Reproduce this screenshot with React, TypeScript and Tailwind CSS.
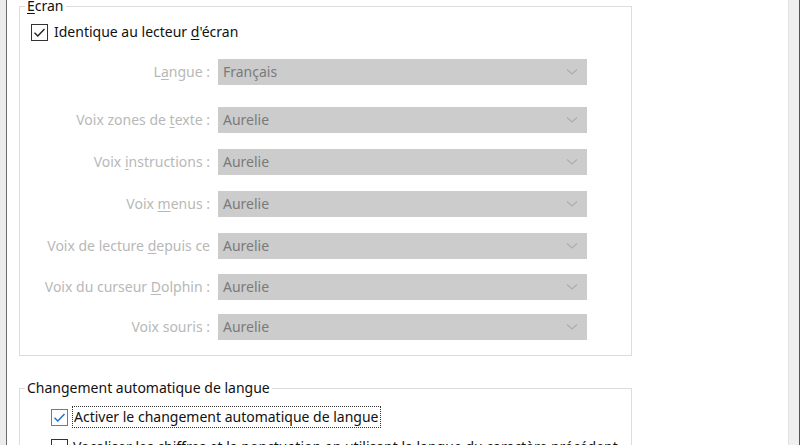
import React from "react";

const font = { fontFamily: '"Noto Sans", "Segoe UI", Arial, sans-serif' };

function Check({ blue }: { blue?: boolean }) {
  return (
    <div
      className={`w-[17px] h-[17px] shrink-0 border bg-white flex items-center justify-center ${
        blue ? "border-[#3c86d4]" : "border-[#333333]"
      }`}
    >
      <svg width="13" height="13" viewBox="0 0 13 13">
        <path d="M1.5 6.8 L4.8 10 L11.5 3" fill="none" stroke={blue ? "#1f6fc7" : "#222"} strokeWidth="1.4" />
      </svg>
    </div>
  );
}

function EmptyCheck() {
  return <div className="w-[17px] h-[17px] shrink-0 border border-[#333333] bg-white" />;
}

function Combo({ value }: { value: string }) {
  return (
    <div className="w-[369px] h-[26px] bg-[#cccccc] flex items-center justify-between pl-[5px] pr-[9px] text-[#7a7a7a]">
      <span>{value}</span>
      <svg width="12" height="8" viewBox="0 0 12 8">
        <path d="M1 1.5 L6 6 L11 1.5" fill="none" stroke="#adadad" strokeWidth="1.1" />
      </svg>
    </div>
  );
}

function Row({ label, value, mt }: { label: React.ReactNode; value: string; mt: string }) {
  return (
    <div className={`flex items-center ${mt}`}>
      <div className="w-[192px] text-right text-[#b8b8b8] whitespace-nowrap pr-[2px] overflow-hidden">{label}</div>
      <div className="ml-[6px]">
        <Combo value={value} />
      </div>
    </div>
  );
}

export default function App() {
  return (
    <div className="w-[800px] h-[445px] overflow-hidden bg-white flex text-[14px] leading-[20px] text-[#111]" style={font}>
      <div className="w-[7px] h-full bg-[#ececec] border-r border-[#6d6d6d] shrink-0" />
      <div className="flex-1 min-w-0">
        <fieldset className="ml-[12px] w-[613px] min-w-0 mt-[-4px] border border-[#dcdcdc] pb-[15px]">
          <legend className="ml-[5px] px-[2px]">
            <span className="underline underline-offset-2">E</span>cran
          </legend>
          <div className="flex items-center mt-[6px] ml-[11px]">
            <Check />
            <span className="ml-[6px]">
              Identique au lecteur <span className="underline underline-offset-2">d</span>'écran
            </span>
          </div>
          <Row
            mt="mt-[17px]"
            label={
              <>
                L<span className="underline underline-offset-2">a</span>ngue :
              </>
            }
            value="Français"
          />
          <Row
            mt="mt-[22px]"
            label={
              <>
                Voix zones de <span className="underline underline-offset-2">t</span>exte :
              </>
            }
            value="Aurelie"
          />
          <Row
            mt="mt-[16px]"
            label={
              <>
                Voix <span className="underline underline-offset-2">i</span>nstructions :
              </>
            }
            value="Aurelie"
          />
          <Row
            mt="mt-[16px]"
            label={
              <>
                Voix <span className="underline underline-offset-2">m</span>enus :
              </>
            }
            value="Aurelie"
          />
          <Row
            mt="mt-[16px]"
            label={
              <>
                Voix de lecture <span className="underline underline-offset-2">d</span>epuis ce
              </>
            }
            value="Aurelie"
          />
          <Row
            mt="mt-[15px]"
            label={
              <>
                Voix du curseur <span className="underline underline-offset-2">D</span>olphin :
              </>
            }
            value="Aurelie"
          />
          <Row mt="mt-[14px]" label="Voix souris :" value="Aurelie" />
        </fieldset>
        <fieldset className="ml-[12px] w-[613px] min-w-0 mt-[22px] border border-[#dcdcdc] h-[100px]">
          <legend className="ml-[5px] px-[2px]">Changement automatique de langue</legend>
          <div className="w-[600px] overflow-hidden">
            <div className="flex items-center mt-[8px] ml-[31px]">
              <Check blue />
              <span className="ml-[4px] px-[1px] border border-dotted border-[#333]">
                Activer le changement automatique de langue
              </span>
            </div>
            <div className="flex items-center mt-[9px] ml-[31px]">
              <EmptyCheck />
              <span className="ml-[5px] whitespace-nowrap">
                Vocaliser les chiffres et la ponctuation en utilisant la langue du caractère précédent
              </span>
            </div>
          </div>
        </fieldset>
      </div>
      <div className="w-[12px] h-full bg-[#f0f0f0] border-l border-[#e2e2e2] border-r border-r-[#555] shrink-0" />
    </div>
  );
}
